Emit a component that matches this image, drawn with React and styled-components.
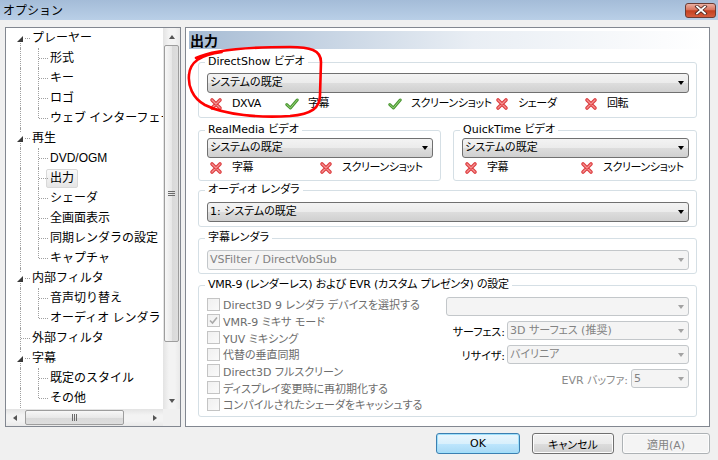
import React from "react";
import styled, { createGlobalStyle } from "styled-components";

const GlobalStyle = createGlobalStyle`
  html, body {
    margin: 0;
    padding: 0;
    background: #f0f0f0;
  }
  * {
    box-sizing: border-box;
  }
  body {
    font-family: "Liberation Sans", "Noto Sans CJK JP", sans-serif;
    font-size: 12px;
    color: #000;
  }
`;

const Window = styled.div`
  position: relative;
  width: 718px;
  height: 460px;
  background: #f0f0f0;
  display: flex;
  flex-direction: column;
  overflow: hidden;
`;

const TitleBar = styled.div`
  flex: none;
  height: 20px;
  display: flex;
  align-items: center;
  justify-content: space-between;
  padding: 0 2px 0 3px;
  background: linear-gradient(#a4bcd8, #b9cfe7);
`;

const Title = styled.span`
  font-family: "Noto Sans CJK JP", sans-serif;
  font-size: 12px;
  line-height: 20px;
`;

const CloseBtn = styled.div`
  width: 31px;
  height: 15px;
  border: 1px solid #6b3b33;
  border-radius: 3px;
  background: linear-gradient(#eab0a2 0%, #d9735c 45%, #c4401f 52%, #d65d3e 100%);
  display: flex;
  align-items: center;
  justify-content: center;
`;

const Body = styled.div`
  flex: 1;
  min-height: 0;
  display: flex;
  gap: 4px;
  padding: 7px 8px 0 5px;
`;

/* ---------- tree ---------- */

const TreePanel = styled.div`
  flex: none;
  width: 176px;
  height: 100%;
  border: 1px solid #828790;
  background: #fff;
  display: grid;
  grid-template-columns: 157px 17px;
  grid-template-rows: 1fr 17px;
`;

const TreeList = styled.div`
  overflow: hidden;
  padding-left: 8px;
`;

const TreeRow = styled.div`
  display: flex;
  align-items: center;
  height: 20px;
  white-space: nowrap;
`;

const Guide = styled.span`
  position: relative;
  flex: none;
  width: 18px;
  height: 20px;

  &::before {
    content: "";
    display: ${(p) => (p.$v ? "block" : "none")};
    position: absolute;
    left: 6px;
    top: ${(p) => p.$vTop || 0}px;
    bottom: ${(p) => p.$vBottom || 0}px;
    border-left: 1px dotted #a0a0a0;
  }

  &::after {
    content: "";
    display: ${(p) => (p.$h ? "block" : "none")};
    position: absolute;
    top: 10px;
    left: ${(p) => p.$hFrom || 7}px;
    right: 2px;
    border-top: 1px dotted #a0a0a0;
  }
`;

const Expander = styled.span`
  position: absolute;
  left: 2px;
  top: 5px;
  width: 9px;
  height: 10px;
  background: #fff;
  z-index: 1;

  &::after {
    content: "";
    position: absolute;
    left: 1px;
    top: 3px;
    width: 0;
    height: 0;
    border-left: 6px solid transparent;
    border-bottom: 6px solid #3a3a3a;
  }
`;

const TreeLabel = styled.span`
  display: inline-block;
  height: 19px;
  line-height: 17px;
  padding: 0 3px;
  margin-left: -4px;
  border: 1px solid ${(p) => (p.$sel ? "#d9d9d9" : "transparent")};
  border-radius: 2px;
  background: ${(p) => (p.$sel ? "linear-gradient(#fafafa, #e5e5e5)" : "none")};
  font-size: 12px;
`;

const VScroll = styled.div`
  display: flex;
  flex-direction: column;
  background: linear-gradient(to right, #e3e3e3, #f3f3f3 35%, #f3f3f3 70%, #e9e9e9);
`;

const HScroll = styled.div`
  display: flex;
  align-items: center;
  background: linear-gradient(#e3e3e3, #f3f3f3 35%, #f3f3f3 70%, #e9e9e9);
`;

const Corner = styled.div`
  background: #f0f0f0;
`;

const ArrowBtn = styled.div`
  flex: none;
  width: 17px;
  height: 17px;
  display: flex;
  align-items: center;
  justify-content: center;
`;

const arrowBorders = {
  up: "border-left: 3.5px solid transparent; border-right: 3.5px solid transparent; border-bottom: 4px solid #555;",
  down: "border-left: 3.5px solid transparent; border-right: 3.5px solid transparent; border-top: 4px solid #555;",
  left: "border-top: 3.5px solid transparent; border-bottom: 3.5px solid transparent; border-right: 4px solid #555;",
  right: "border-top: 3.5px solid transparent; border-bottom: 3.5px solid transparent; border-left: 4px solid #555;",
};

const Arrow = styled.span`
  width: 0;
  height: 0;
  ${(p) => arrowBorders[p.$dir]}
`;

const Track = styled.div`
  flex: 1;
  display: flex;
  flex-direction: ${(p) => (p.$horizontal ? "row" : "column")};
  align-items: ${(p) => (p.$horizontal ? "center" : "stretch")};
`;

const Thumb = styled.div`
  flex: none;
  display: flex;
  align-items: center;
  justify-content: center;
  border: 1px solid #9d9d9d;
  border-radius: 2px;
  ${(p) =>
    p.$horizontal
      ? `height: 15px; width: ${p.$len}px; margin-left: 2px;
         background: linear-gradient(#f7f7f7, #e8e8e8 50%, #d9d9d9 51%, #dedede);`
      : `width: 15px; height: ${p.$len}px; margin-left: 1px;
         background: linear-gradient(to right, #f7f7f7, #e8e8e8 50%, #d9d9d9 51%, #dedede);`}
`;

const Grip = styled.span`
  ${(p) =>
    p.$horizontal
      ? `width: 5px; height: 7px;
         background: repeating-linear-gradient(to right, #6b6b6b 0 1px, transparent 1px 2px);`
      : `width: 7px; height: 5px;
         background: repeating-linear-gradient(#6b6b6b 0 1px, transparent 1px 2px);`}
`;

/* ---------- page ---------- */

const MainPanel = styled.div`
  flex: 1;
  height: 100%;
  border: 1px solid #828790;
  background: #fff;
  padding: 3px;
  display: flex;
  flex-direction: column;
`;

const PageHeader = styled.div`
  flex: none;
  height: 18px;
  padding-left: 1px;
  background: linear-gradient(to right, #a7bcd4, #e9eef4 55%, #ffffff);
  font-family: "Noto Sans CJK JP", sans-serif;
  font-weight: bold;
  font-size: 14px;
  line-height: 18px;
`;

const PageBody = styled.div`
  display: flex;
  flex-direction: column;
  padding: 6px 9px 0;
  font-family: "DejaVu Sans", "Noto Sans CJK JP", sans-serif;
  font-size: 11px;
  font-feature-settings: "palt";
`;

const Group = styled.fieldset`
  margin: ${(p) => p.$mt || 0}px 0 0;
  padding: ${(p) => p.$pt}px 7px ${(p) => p.$pb}px 8px;
  border: 1px solid #d5dfe5;
  border-radius: 3px;
  min-width: 0;
`;

const Legend = styled.legend`
  padding: 0 3px;
  margin-left: -2px;
  line-height: 14px;
  font-size: 11px;
  letter-spacing: ${(p) => p.$tight ? "-0.2px" : "0"};
`;

const Pair = styled.div`
  display: grid;
  grid-template-columns: 243px 1fr;
  gap: 12px;
  margin-top: 5px;
`;

const Combo = styled.div`
  flex: none;
  display: flex;
  align-items: center;
  justify-content: space-between;
  width: ${(p) => (p.$w ? `${p.$w}px` : "100%")};
  height: ${(p) => p.$h || 20}px;
  padding: 0 4px 0 2px;
  border: 1px solid ${(p) => (p.$off ? "#c3c7ca" : "#707070")};
  border-radius: 3px;
  background: ${(p) =>
    p.$off ? "#f4f4f4" : "linear-gradient(#f3f3f3, #ebebeb 50%, #dddddd 51%, #d0d0d0)"};
  color: ${(p) => (p.$off ? "#838383" : "#000")};
  white-space: nowrap;
  line-height: 16px;
`;

const Caret = styled.span`
  flex: none;
  width: 0;
  height: 0;
  border-left: 3.5px solid transparent;
  border-right: 3.5px solid transparent;
  border-top: 4px solid ${(p) => (p.$off ? "#a2a2a2" : "#000")};
`;

const StatusRow = styled.div`
  display: flex;
  align-items: center;
  height: 14px;
  margin-top: ${(p) => p.$mt}px;
  padding-left: 2px;
`;

const Status = styled.div`
  flex: none;
  width: ${(p) => (p.$w ? `${p.$w}px` : "auto")};
  display: flex;
  align-items: center;
  gap: 9px;
  white-space: nowrap;
  line-height: 14px;
  letter-spacing: -0.4px;

  svg {
    flex: none;
  }
`;

const VmrBody = styled.div`
  display: flex;
`;

const CheckList = styled.div`
  flex: 1;
  display: flex;
  flex-direction: column;
`;

const CheckRow = styled.div`
  display: flex;
  align-items: center;
  gap: 3px;
  height: 16.66px;
  color: #6d6d6d;
  white-space: nowrap;
`;

const Box = styled.span`
  flex: none;
  width: 13px;
  height: 13px;
  border: 1px solid #c4c4c4;
  background: linear-gradient(135deg, #f0f0f0, #fafafa);
  display: flex;
  align-items: center;
  justify-content: center;
`;

const SideCol = styled.div`
  flex: none;
  width: 243px;
  display: flex;
  flex-direction: column;
  gap: 5px;
  padding-top: 1px;
`;

const FieldRow = styled.div`
  display: flex;
  align-items: center;
  justify-content: flex-end;
  gap: ${(p) => p.$gap || 2}px;
`;

const FieldLabel = styled.span`
  color: ${(p) => (p.$dim ? "#8a8a8a" : "#000")};
  white-space: nowrap;
`;

/* ---------- footer ---------- */

const Footer = styled.div`
  flex: none;
  height: 33px;
  display: flex;
  justify-content: flex-end;
  align-items: flex-start;
  padding: 6px 8px 0 0;
  font-family: "DejaVu Sans", "Noto Sans CJK JP", sans-serif;
  font-feature-settings: "palt";
`;

const Button = styled.div`
  width: ${(p) => p.$w}px;
  height: 21px;
  margin-left: ${(p) => p.$ml || 0}px;
  display: flex;
  align-items: center;
  justify-content: center;
  border-radius: 3px;
  border: 1px solid ${(p) => (p.$default ? "#3c7fb1" : p.$off ? "#adb2b5" : "#707070")};
  background: ${(p) =>
    p.$off
      ? "#f4f4f4"
      : p.$default
      ? "linear-gradient(#eaf6fd, #d9f0fc 50%, #bee6fd 51%, #a7d9f5)"
      : "linear-gradient(#f2f2f2, #ebebeb 50%, #dddddd 51%, #cfcfcf)"};
  box-shadow: ${(p) => (p.$default ? "inset 0 0 0 1px #9fe0fb" : "inset 0 0 0 1px #fcfcfc")};
  color: ${(p) => (p.$off ? "#838383" : "#000")};
  font-size: 11px;
`;

const Overlay = styled.svg`
  position: absolute;
  left: 0;
  top: 0;
  pointer-events: none;
`;

/* ---------- icons ---------- */

const CrossIcon = () => (
  <svg width="14" height="14" viewBox="0 0 14 14">
    <path d="M3 3 L11 11 M11 3 L3 11" stroke="#dc3b3e" strokeWidth="3.6" strokeLinecap="round" />
    <path d="M3 3 L11 11 M11 3 L3 11" stroke="#f69191" strokeWidth="1.3" strokeLinecap="round" />
  </svg>
);

const CheckIcon = () => (
  <svg width="14" height="14" viewBox="0 0 14 14">
    <path
      d="M1.8 7.6 L5.4 11 L12.2 3"
      fill="none"
      stroke="#4a9632"
      strokeWidth="3"
      strokeLinecap="round"
      strokeLinejoin="round"
    />
    <path
      d="M1.8 7.6 L5.4 11 L12.2 3"
      fill="none"
      stroke="#9bd67c"
      strokeWidth="1"
      strokeLinecap="round"
      strokeLinejoin="round"
    />
  </svg>
);

const SmallCheck = () => (
  <svg width="9" height="9" viewBox="0 0 9 9">
    <path d="M1 4.5 L3.5 7 L8 1.5" fill="none" stroke="#a9a9a9" strokeWidth="1.6" />
  </svg>
);

const CloseGlyph = () => (
  <svg width="14" height="10" viewBox="0 0 14 10">
    <path d="M3 1.5 L11 8.5 M11 1.5 L3 8.5" stroke="#4a2620" strokeWidth="3.4" strokeLinecap="square" />
    <path d="M3 1.5 L11 8.5 M11 1.5 L3 8.5" stroke="#ffffff" strokeWidth="1.8" strokeLinecap="square" />
  </svg>
);

/* ---------- data ---------- */

const tree = [
  { t: "プレーヤー", root: true, first: true, exp: true },
  { t: "形式" },
  { t: "キー" },
  { t: "ロゴ" },
  { t: "ウェブ インターフェース", last: true },
  { t: "再生", root: true, exp: true },
  { t: "DVD/OGM" },
  { t: "出力", sel: true },
  { t: "シェーダ" },
  { t: "全画面表示" },
  { t: "同期レンダラの設定" },
  { t: "キャプチャ", last: true },
  { t: "内部フィルタ", root: true, exp: true },
  { t: "音声切り替え" },
  { t: "オーディオ レンダラ", last: true },
  { t: "外部フィルタ", root: true },
  { t: "字幕", root: true, exp: true },
  { t: "既定のスタイル" },
  { t: "その他", last: true },
];

const checks = [
  { t: "Direct3D 9 レンダラ デバイスを選択する" },
  { t: "VMR-9 ミキサ モード", on: true },
  { t: "YUV ミキシング" },
  { t: "代替の垂直同期" },
  { t: "Direct3D フルスクリーン" },
  { t: "ディスプレイ変更時に再初期化する" },
  { t: "コンパイルされたシェーダをキャッシュする" },
];

function Select({ children, off, w, h }) {
  return (
    <Combo $off={off} $w={w} $h={h}>
      <span>{children}</span>
      <Caret $off={off} />
    </Combo>
  );
}

function Flag({ ok, label, w }) {
  return (
    <Status $w={w}>
      {ok ? <CheckIcon /> : <CrossIcon />}
      <span>{label}</span>
    </Status>
  );
}

function Tree() {
  return (
    <TreeList>
      {tree.map((n) =>
        n.root ? (
          <TreeRow key={n.t}>
            <Guide $v $vTop={n.first ? 10 : 0} $h $hFrom={n.exp ? 10 : 7}>
              {n.exp && <Expander />}
            </Guide>
            <TreeLabel>{n.t}</TreeLabel>
          </TreeRow>
        ) : (
          <TreeRow key={n.t}>
            <Guide $v />
            <Guide $v $vBottom={n.last ? 10 : 0} $h />
            <TreeLabel $sel={n.sel}>{n.t}</TreeLabel>
          </TreeRow>
        )
      )}
    </TreeList>
  );
}

function App() {
  return (
    <>
      <GlobalStyle />
      <Window>
        <TitleBar>
          <Title>オプション</Title>
          <CloseBtn>
            <CloseGlyph />
          </CloseBtn>
        </TitleBar>

        <Body>
          <TreePanel>
            <Tree />
            <VScroll>
              <ArrowBtn>
                <Arrow $dir="up" />
              </ArrowBtn>
              <Track>
                <Thumb $len={297}>
                  <Grip />
                </Thumb>
              </Track>
              <ArrowBtn>
                <Arrow $dir="down" />
              </ArrowBtn>
            </VScroll>
            <HScroll>
              <ArrowBtn>
                <Arrow $dir="left" />
              </ArrowBtn>
              <Track $horizontal>
                <Thumb $horizontal $len={99}>
                  <Grip $horizontal />
                </Thumb>
              </Track>
              <ArrowBtn>
                <Arrow $dir="right" />
              </ArrowBtn>
            </HScroll>
            <Corner />
          </TreePanel>

          <MainPanel>
            <PageHeader>出力</PageHeader>
            <PageBody>
              <Group $pt={4} $pb={6}>
                <Legend>DirectShow ビデオ</Legend>
                <Select>システムの既定</Select>
                <StatusRow $mt={4}>
                  <Flag label="DXVA" w={76} />
                  <Flag ok label="字幕" w={103} />
                  <Flag ok label="スクリーンショット" w={107} />
                  <Flag label="シェーダ" w={89} />
                  <Flag label="回転" />
                </StatusRow>
              </Group>

              <Pair>
                <Group $pt={1} $pb={5}>
                  <Legend>RealMedia ビデオ</Legend>
                  <Select>システムの既定</Select>
                  <StatusRow $mt={3}>
                    <Flag label="字幕" w={110} />
                    <Flag label="スクリーンショット" />
                  </StatusRow>
                </Group>
                <Group $pt={1} $pb={5}>
                  <Legend>QuickTime ビデオ</Legend>
                  <Select>システムの既定</Select>
                  <StatusRow $mt={3}>
                    <Flag label="字幕" w={116} />
                    <Flag label="スクリーンショット" />
                  </StatusRow>
                </Group>
              </Pair>

              <Group $mt={2} $pt={5} $pb={4}>
                <Legend>オーディオ レンダラ</Legend>
                <Select>1: システムの既定</Select>
              </Group>

              <Group $mt={4} $pt={5} $pb={3}>
                <Legend>字幕レンダラ</Legend>
                <Select off>VSFilter / DirectVobSub</Select>
              </Group>

              <Group $mt={4} $pt={4} $pb={3}>
                <Legend $tight>VMR-9 (レンダーレス) および EVR (カスタム プレゼンタ) の設定</Legend>
                <VmrBody>
                  <CheckList>
                    {checks.map((c) => (
                      <CheckRow key={c.t}>
                        <Box>{c.on && <SmallCheck />}</Box>
                        <span>{c.t}</span>
                      </CheckRow>
                    ))}
                  </CheckList>
                  <SideCol>
                    <Select off h={19} />
                    <FieldRow>
                      <FieldLabel>サーフェス:</FieldLabel>
                      <Select off w={182} h={19}>
                        3D サーフェス (推奨)
                      </Select>
                    </FieldRow>
                    <FieldRow>
                      <FieldLabel>リサイザ:</FieldLabel>
                      <Select off w={182} h={19}>
                        バイリニア
                      </Select>
                    </FieldRow>
                    <FieldRow $gap={3}>
                      <FieldLabel $dim>EVR バッファ:</FieldLabel>
                      <Select off w={58} h={19}>
                        5
                      </Select>
                    </FieldRow>
                  </SideCol>
                </VmrBody>
              </Group>
            </PageBody>
          </MainPanel>
        </Body>

        <Footer>
          <Button $default $w={84}>
            OK
          </Button>
          <Button $w={82} $ml={12}>
            キャンセル
          </Button>
          <Button $off $w={88} $ml={8}>
            適用(A)
          </Button>
        </Footer>

        <Overlay width="718" height="460" viewBox="0 0 718 460">
          <path
            d="M196 58 C212 50, 250 47, 290 47 C310 47, 321 50, 321 62 L320 95 C320 108, 312 114, 290 116 C260 118, 225 115, 205 105 C192 98, 188 85, 189 75 C190 62, 200 55, 222 52"
            fill="none"
            stroke="#ff0000"
            strokeWidth="2.6"
            strokeLinecap="round"
          />
        </Overlay>
      </Window>
    </>
  );
}

export default App;
